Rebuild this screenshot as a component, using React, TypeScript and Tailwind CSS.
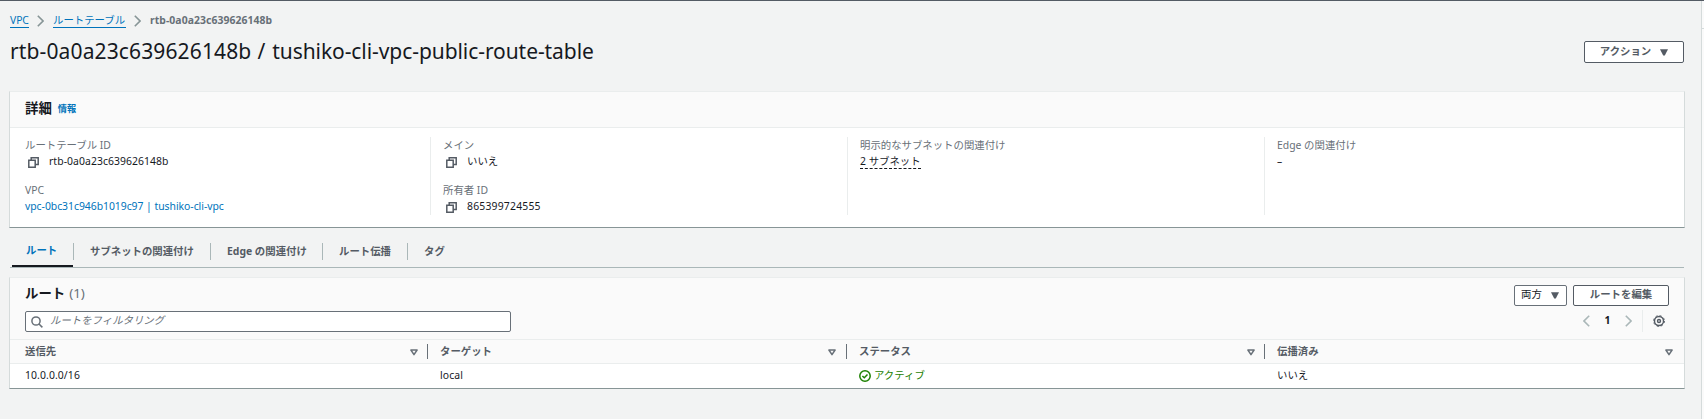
import { ReactNode } from "react";

const JP = "font-['Noto_Sans','Noto_Sans_CJK_JP',sans-serif]";

function T({ w, className = "", children }: { w?: string; className?: string; children: ReactNode }) {
  return <span className={`inline-block whitespace-nowrap ${w ?? ""} ${className}`}>{children}</span>;
}

function Copy() {
  return (
    <svg className="mt-[2px] ml-[3px] mr-[10px] h-[11px] w-[11px] shrink-0" viewBox="0 0 11 11" fill="none" stroke="#545b64" strokeWidth="1.5">
      <path d="M.8 3.3h6.4v6.9H.8zM3.2 3V.8h7v6.7H7.6" />
    </svg>
  );
}

function Down({ className = "" }: { className?: string }) {
  return (
    <svg className={`h-[7px] w-[8px] shrink-0 ${className}`} viewBox="0 0 8 7" fill="#545b64">
      <path d="M0 .3h8L4.8 6.5H3.2z" />
    </svg>
  );
}

function Sort() {
  return (
    <svg className="mt-px h-[7px] w-[8px] shrink-0" viewBox="0 0 8 7" fill="none" stroke="#687078" strokeWidth="1.5" strokeLinejoin="round">
      <path d="M.9 1h6.2L4 5.6z" />
    </svg>
  );
}

function Chevron({ flip = false, color = "#879596", className = "" }: { flip?: boolean; color?: string; className?: string }) {
  return (
    <svg className={`h-[12px] w-[7px] shrink-0 ${className}`} viewBox="0 0 7 12" fill="none" stroke={color} strokeWidth="1.6">
      <path d={flip ? "M6.2.8 1 6l5.2 5.2" : "M.8.8 6 6 .8 11.2"} />
    </svg>
  );
}

function Field({ label, children }: { label: string; children: ReactNode }) {
  return (
    <div className="h-[45px]">
      <div className="h-[15px] leading-[17px] text-[#687078]">{label}</div>
      <div className="flex h-[18px] items-center leading-[18px]">{children}</div>
    </div>
  );
}

function Head({ children, pad = "border-r border-[#687078] pr-[9px]" }: { children: string; pad?: string }) {
  return (
    <div className={`flex h-[15px] items-center justify-between font-bold text-[#545b64] ${pad}`}>
      <span>{children}</span>
      <Sort />
    </div>
  );
}

const tabs = [
  { name: "サブネットの関連付け", w: "w-[137px]" },
  { name: "Edge の関連付け", w: "w-[112px]" },
  { name: "ルート伝播", w: "w-[85px]" },
  { name: "タグ", w: "w-[60px]" },
];

export default function App() {
  return (
    <div className={`flex h-[419px] w-[1704px] flex-col overflow-hidden border-t border-[#545b64] bg-[#f2f3f3] text-[10.4px] text-[#16191f] ${JP}`}>
      <div className="flex flex-1">
        <main className="w-[1701px] shrink-0 pl-[9px] pr-[16px]">
          <nav className="flex h-[38px] items-center pt-px pl-px">
            <T w="w-[19px]" className="border-b border-[#0073bb] leading-[14px] tracking-[-0.1px] text-[#0073bb]">VPC</T>
            <Chevron className="ml-[8px]" />
            <T w="w-[73px]" className="ml-[9px] border-b border-[#0073bb] leading-[14px] text-[#0073bb]">ルートテーブル</T>
            <Chevron className="ml-[8px]" />
            <T className="ml-[9px] font-bold tracking-[0.07px] text-[#687078]">rtb-0a0a23c639626148b</T>
          </nav>
          <div className="flex h-[52px] items-start justify-between">
            <h1 className="whitespace-pre pl-px text-[21px] leading-[25px]">
              <span className="tracking-[0.13px]">rtb-0a0a23c639626148b</span>
              <span className="tracking-[0.7px]"> / </span>
              <span className="tracking-[-0.07px]">tushiko-cli-vpc-public-route-table</span>
            </h1>
            <button className="mr-px mt-[2px] flex h-[22px] w-[100px] items-center justify-center rounded-[2px] border border-[#545b64] bg-white font-bold text-[#545b64]">
              <span className="-mt-px">アクション</span>
              <Down className="ml-[9px]" />
            </button>
          </div>

          <section className="h-[137px] border border-t-[#eaeded] border-r-[#d5dbdb] border-b-[#879596] border-l-[#d5dbdb] bg-white">
            <div className="flex h-[36px] items-center border-b border-[#eaeded] bg-[#fafafa] pb-[3px] pl-[15px]">
              <h2 className="text-[13.4px] font-bold">詳細</h2>
              <span className="ml-[6px] mt-[2px] text-[9.2px] font-bold text-[#0073bb]">情報</span>
            </div>
            <div className="grid grid-cols-[405px_417px_417px_1fr] pt-[9px]">
              <div className="h-[78px] pl-[15px]">
                <Field label="ルートテーブル ID"><Copy /><span className="tracking-[0.07px]">rtb-0a0a23c639626148b</span></Field>
                <Field label="VPC"><span className="tracking-[-0.03px] text-[#0073bb]">vpc-0bc31c946b1019c97 | tushiko-cli-vpc</span></Field>
              </div>
              <div className="h-[78px] border-l border-[#eaeded] pl-[12px] ml-[15px] mr-[-15px]">
                <Field label="メイン"><Copy />いいえ</Field>
                <Field label="所有者 ID"><Copy /><span className="tracking-[0.2px]">865399724555</span></Field>
              </div>
              <div className="h-[78px] border-l border-[#eaeded] pl-[12px] ml-[15px] mr-[-15px]">
                <Field label="明示的なサブネットの関連付け"><span className="mt-px border-b border-dashed border-[#16191f] leading-[14px]">2 サブネット</span></Field>
              </div>
              <div className="h-[78px] border-l border-[#eaeded] pl-[12px] ml-[15px]">
                <Field label="Edge の関連付け">–</Field>
              </div>
            </div>
          </section>

          <div className="ml-px mr-px flex h-[40px] items-end border-b border-[#aab7b8]">
            <div className="ml-[2px] flex h-[27px] w-[61px] flex-col border-b-2 border-[#16191f] pt-[3px] pl-[14px] font-bold text-[#0073bb]">ルート</div>
            {tabs.map((t) => (
              <div key={t.name} className={`mb-[7px] flex h-[17px] items-center border-l border-[#aab7b8] pl-[16px] font-bold text-[#545b64] ${t.w}`}>
                <span className="whitespace-nowrap">{t.name}</span>
              </div>
            ))}
          </div>

          <section className="mt-[9px] h-[112px] border border-t-[#eaeded] border-r-[#d5dbdb] border-b-[#879596] border-l-[#d5dbdb] bg-white">
            <div className="flex h-[62px] justify-between border-b border-[#eaeded] bg-[#fafafa] pl-[15px] pr-[15px]">
              <div>
                <h2 className="flex h-[33px] items-center pb-[2px] text-[13.4px] font-bold">ルート<span className="ml-[4px] font-normal text-[#687078]">(1)</span></h2>
                <div className="flex h-[21px] w-[486px] items-center rounded-[2px] border border-[#687078] bg-white pl-[5px]">
                  <svg className="h-[12px] w-[12px]" viewBox="0 0 12 12" fill="none" stroke="#687078" strokeWidth="1.5"><circle cx="5" cy="5" r="4.1" /><path d="m8 8 3.4 3.4" /></svg>
                  <span className="-mt-px ml-[7px] italic text-[#687078]">ルートをフィルタリング</span>
                </div>
              </div>
              <div className="flex flex-col items-end pt-[7px]">
                <div className="flex gap-[6px]">
                  <button className="flex h-[21px] w-[53px] items-center rounded-[2px] border border-[#687078] bg-white pl-[6px]"><span className="-mt-px">両方</span><Down className="ml-[9px]" /></button>
                  <button className="h-[21px] w-[96px] rounded-[2px] border border-[#545b64] bg-white pb-px font-bold text-[#545b64]">ルートを編集</button>
                </div>
                <div className="mt-[4px] flex h-[22px] items-center">
                  <Chevron flip color="#aab7b8" />
                  <b className="mx-[14px] w-[7px] text-center">1</b>
                  <Chevron color="#aab7b8" />
                  <div className="ml-[10px] h-[22px] border-l border-[#eaeded]" />
                  <svg className="ml-[10px] mr-[4px] h-[12px] w-[12px]" viewBox="0 0 12 12" fill="none" stroke="#545b64"><circle cx="6" cy="6" r="4.5" strokeWidth="1.4" /><circle cx="6" cy="6" r="5.4" strokeWidth="1" strokeDasharray="2.12 2.12" /><circle cx="6" cy="6" r="1.5" strokeWidth="1.4" /></svg>
                </div>
              </div>
            </div>
            <div className="grid h-[24px] grid-cols-[403px_407px_406px_1fr] items-center gap-x-[12px] border-b border-[#eaeded] bg-[#fafafa] pl-[15px]">
              <Head>送信先</Head>
              <Head pad="border-r border-[#687078] pr-[10px]">ターゲット</Head>
              <Head>ステータス</Head>
              <Head pad="pr-[11px]">伝播済み</Head>
            </div>
            <div className="grid h-[24px] grid-cols-[403px_407px_406px_1fr] items-center gap-x-[12px] pl-[15px]">
              <span className="tracking-[0.1px]">10.0.0.0/16</span>
              <span className="tracking-[0.1px]">local</span>
              <span className="flex items-center text-[#1d8102]">
                <svg className="mr-[3px] h-[12px] w-[12px]" viewBox="0 0 12 12" fill="none" stroke="currentColor" strokeWidth="1.5"><circle cx="6" cy="6" r="5.2" /><path d="m3.4 6 1.9 1.8 3.2-3.3" /></svg>
                アクティブ
              </span>
              <span>いいえ</span>
            </div>
          </section>
        </main>
        <aside className="flex-1 border-l border-[#d5dbdb] bg-[#fafafa]">
          <div className="h-[28px] border-b border-[#d5dbdb]" />
        </aside>
      </div>
    </div>
  );
}
